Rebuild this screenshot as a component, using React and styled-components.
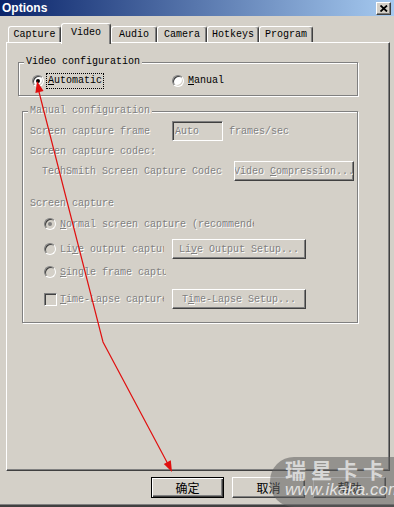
import React from 'react';
import styled, { createGlobalStyle, css } from 'styled-components';

const Global = createGlobalStyle`
  html, body { margin: 0; padding: 0; background: #d4d0c8; }
  body { font-family: "Liberation Mono", "DejaVu Sans Mono", monospace; font-size: 10px; color: #000; }
  * { box-sizing: border-box; }
  u { text-decoration: underline; text-underline-offset: 1px; }
`;

const Window = styled.div`
  position: relative;
  width: 394px;
  height: 507px;
  overflow: hidden;
  background: #d4d0c8;
  display: flex;
  flex-direction: column;
  box-shadow: inset 0 -2px 0 #404040, inset 0 -3px 0 #808080;
`;

const TitleBar = styled.div`
  flex: none;
  height: 16px;
  display: flex;
  align-items: center;
  justify-content: space-between;
  padding: 0 3px 0 2px;
  background: linear-gradient(to right, #0a246a, #a6caf0);
`;

const Title = styled.span`
  color: #fff;
  font: bold 12px "Liberation Sans", Arial, sans-serif;
`;

const CloseBtn = styled.span`
  width: 15px;
  height: 13px;
  display: flex;
  align-items: center;
  justify-content: center;
  background: #d4d0c8;
  border: 1px solid;
  border-color: #fff #404040 #404040 #fff;
  box-shadow: inset -1px -1px #808080;
`;

const TabStrip = styled.div`
  flex: none;
  display: flex;
  align-items: flex-end;
  height: 19px;
  margin: 7px 0 0 8px;
  position: relative;
  z-index: 1;
`;

const Tab = styled.div`
  flex: none;
  width: ${p => p.$w}px;
  height: ${p => (p.$active ? 21 : 16)}px;
  margin-bottom: ${p => (p.$active ? -2 : 0)}px;
  padding-bottom: ${p => (p.$active ? 3 : 0)}px;
  background: #d4d0c8;
  border-top: 1px solid #fff;
  border-left: 1px solid #fff;
  border-right: 1px solid #404040;
  border-radius: 3px 3px 0 0;
  box-shadow: inset -1px 0 #808080;
  display: flex;
  align-items: center;
  justify-content: center;
  white-space: nowrap;
`;

const Panel = styled.div`
  flex: none;
  width: 384px;
  height: 429px;
  margin-left: 6px;
  border: 1px solid;
  border-color: #fff #404040 #404040 #fff;
  box-shadow: inset -1px -1px #808080;
  padding: 1px;
  display: flex;
  flex-direction: column;
`;

const Group = styled.div`
  flex: none;
  margin: ${p => p.$mt}px 0 0 ${p => p.$ml}px;
  width: ${p => p.$w}px;
  height: ${p => p.$h}px;
  border: 1px solid #808080;
  box-shadow: inset 1px 1px #fff, 1px 1px #fff;
  display: flex;
  flex-direction: column;
`;

const Legend = styled.span`
  align-self: flex-start;
  margin: -7px 0 0 5px;
  padding: 0 2px;
  height: 12px;
  line-height: 12px;
  background: #d4d0c8;
  white-space: nowrap;
  ${p => p.$disabled && css`
    color: #808080;
    text-shadow: 1px 1px 0 #fff;
  `}
`;

const OptionRow = styled.div`
  display: flex;
  align-items: center;
  height: 14px;
  margin-top: 6px;
  padding-left: 13px;
`;

const Option = styled.div`
  flex: none;
  display: flex;
  align-items: center;
  width: ${p => (p.$w ? `${p.$w}px` : 'auto')};
  gap: 3px;
`;

const OptLabel = styled.span`
  padding: 1px;
  line-height: 12px;
  white-space: nowrap;
  ${p => p.$focus && css`outline: 1px dotted #000; outline-offset: 0;`}
`;

const Radio = styled.span`
  position: relative;
  flex: none;
  width: 12px;
  height: 12px;
  border-radius: 50%;
  background: ${p => (p.$disabled ? '#d4d0c8' : '#fff')};
  border: 1px solid;
  border-color: #808080 #fff #fff #808080;
  box-shadow: inset 1px 1px #404040, inset -1px -1px #d4d0c8;
  ${p => p.$checked && css`
    &::after {
      content: '';
      position: absolute;
      left: 3px;
      top: 3px;
      width: 4px;
      height: 4px;
      border-radius: 50%;
      background: ${p.$disabled ? '#808080' : '#000'};
    }
  `}
`;

const Check = styled.span`
  flex: none;
  width: 13px;
  height: 13px;
  background: #d4d0c8;
  border: 1px solid;
  border-color: #808080 #fff #fff #808080;
  box-shadow: inset 1px 1px #404040, inset -1px -1px #d4d0c8;
`;

const Row = styled.div`
  flex: none;
  display: flex;
  align-items: center;
  height: 20px;
  margin-top: ${p => p.$mt || 0}px;
  padding-left: ${p => p.$pl}px;
`;

const Dim = styled.span`
  flex: none;
  display: block;
  color: #808080;
  text-shadow: 1px 1px 0 #fff;
  white-space: nowrap;
  overflow: hidden;
  width: ${p => (p.$w ? `${p.$w}px` : 'auto')};
  margin-left: ${p => p.$ml || 0}px;
`;

const Field = styled.div`
  flex: none;
  width: 51px;
  height: 20px;
  border: 1px solid;
  border-color: #808080 #fff #fff #808080;
  box-shadow: inset 1px 1px #404040, inset -1px -1px #d4d0c8;
  background: #d4d0c8;
  padding-left: 2px;
  display: flex;
  align-items: center;
`;

const Button = styled.div`
  flex: none;
  width: ${p => p.$w}px;
  height: ${p => p.$h}px;
  margin-left: ${p => p.$ml || 0}px;
  display: flex;
  align-items: center;
  justify-content: center;
  overflow: hidden;
  white-space: nowrap;
  background: #d4d0c8;
  border: 1px solid;
  border-color: #fff #404040 #404040 #fff;
  box-shadow: inset -1px -1px #808080;
  ${p => p.$default && css`
    border-color: #000;
    box-shadow: inset 1px 1px #fff, inset -1px -1px #404040, inset -2px -2px #808080;
  `}
  & > span { flex: none; }
`;

const CnText = styled.span`
  font: 12px "Noto Sans CJK SC", "Noto Sans", sans-serif;
  color: #000;
`;

const Footer = styled.div`
  flex: none;
  display: flex;
  justify-content: flex-end;
  gap: 8px;
  margin-top: 6px;
  padding-right: 8px;
`;

const Watermark = styled.div`
  position: absolute;
  right: 0;
  bottom: 0;
  width: 124px;
  height: 50px;
  border-radius: 24px 0 0 24px;
  background: rgba(95, 95, 95, 0.55);
  display: flex;
  flex-direction: column;
  align-items: flex-start;
  padding: 1px 0 0 15px;
  pointer-events: none;
  white-space: nowrap;
`;

const WmTitle = styled.span`
  font: bold 21px "Noto Sans CJK SC", sans-serif;
  letter-spacing: 5px;
  line-height: 22px;
  color: rgba(235, 235, 235, 0.8);
`;

const WmUrl = styled.span`
  font: italic 17px "Liberation Sans", Arial, sans-serif;
  line-height: 20px;
  color: rgba(255, 255, 255, 0.75);
`;

const Overlay = styled.svg`
  position: absolute;
  left: 0;
  top: 0;
  pointer-events: none;
`;

const tabs = [
  { t: 'Capture', w: 53 },
  { t: 'Video', w: 50, active: true },
  { t: 'Audio', w: 46 },
  { t: 'Camera', w: 50 },
  { t: 'Hotkeys', w: 52 },
  { t: 'Program', w: 54 },
];

export default function App() {
  return (
    <>
      <Global />
      <Window>
        <TitleBar>
          <Title>Options</Title>
          <CloseBtn>
            <svg width="8" height="7" viewBox="0 0 8 7">
              <path d="M0.5 0.5 L7 6.5 M7 0.5 L0.5 6.5" stroke="#000" strokeWidth="1.8" />
            </svg>
          </CloseBtn>
        </TitleBar>

        <TabStrip>
          {tabs.map(tb => (
            <Tab key={tb.t} $w={tb.w} $active={tb.active}>{tb.t}</Tab>
          ))}
        </TabStrip>

        <Panel>
          <Group $mt={18} $ml={10} $w={340} $h={34}>
            <Legend>Video configuration</Legend>
            <OptionRow>
              <Option $w={140}>
                <Radio $checked />
                <OptLabel $focus><u>A</u>utomatic</OptLabel>
              </Option>
              <Option>
                <Radio />
                <OptLabel><u>M</u>anual</OptLabel>
              </Option>
            </OptionRow>
          </Group>

          <Group $mt={15} $ml={14} $w={336} $h={212}>
            <Legend $disabled>Manual configuration</Legend>
            <Row $mt={4} $pl={7}>
              <Dim $w={142}>Screen capture frame</Dim>
              <Field><Dim>Auto</Dim></Field>
              <Dim $ml={6}>frames/sec</Dim>
            </Row>
            <Row $pl={7}>
              <Dim>Screen capture codec:</Dim>
            </Row>
            <Row $pl={19}>
              <Dim $w={192}>TechSmith Screen Capture Codec</Dim>
              <Button $w={120} $h={20}>
                <Dim>Video <u>C</u>ompression...</Dim>
              </Button>
            </Row>
            <Row $mt={12} $pl={7}>
              <Dim>Screen capture</Dim>
            </Row>
            <Row $mt={1} $pl={21}>
              <Radio $checked $disabled />
              <Dim $ml={4} $w={194}><u>N</u>ormal screen capture (recommended)</Dim>
            </Row>
            <Row $mt={5} $pl={21}>
              <Radio $disabled />
              <Dim $ml={4} $w={104}>Li<u>v</u>e output capture</Dim>
              <Button $w={134} $h={20} $ml={8}>
                <Dim>Li<u>v</u>e Output Setup...</Dim>
              </Button>
            </Row>
            <Row $mt={3} $pl={21}>
              <Radio $disabled />
              <Dim $ml={4} $w={106}><u>S</u>ingle frame capture</Dim>
            </Row>
            <Row $mt={7} $pl={21}>
              <Check />
              <Dim $ml={3} $w={104}><u>T</u>ime-Lapse capture</Dim>
              <Button $w={134} $h={20} $ml={8}>
                <Dim>T<u>i</u>me-Lapse Setup...</Dim>
              </Button>
            </Row>
          </Group>
        </Panel>

        <Footer>
          <Button $w={73} $h={21} $default><CnText>确定</CnText></Button>
          <Button $w={73} $h={21}><CnText>取消</CnText></Button>
          <Button $w={73} $h={21}><CnText>帮助</CnText></Button>
        </Footer>

        <Overlay width="394" height="507" viewBox="0 0 394 507">
          <polyline points="38,88 103,342 169,466" fill="none" stroke="#e01010" strokeWidth="1.2" />
          <polygon points="37,81 43.6,91 35.4,93" fill="#e01010" />
          <polygon points="172,472 163.8,464.1 170.8,460.3" fill="#e01010" />
        </Overlay>

        <Watermark>
          <WmTitle>瑞星卡卡</WmTitle>
          <WmUrl>www.ikaka.com</WmUrl>
        </Watermark>
      </Window>
    </>
  );
}
